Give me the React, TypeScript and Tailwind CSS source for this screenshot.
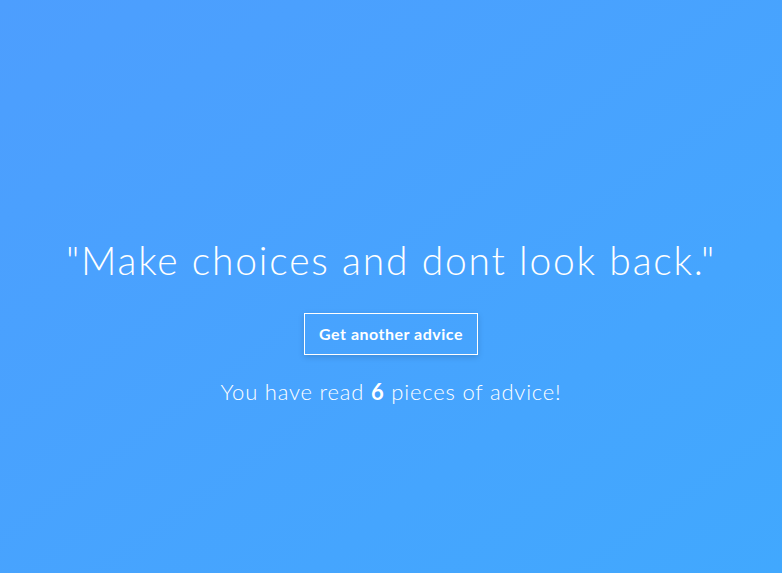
export default function App() {
  const count = 6;
  return (
    <div className="w-full h-[573px] bg-gradient-to-br from-[#4d9efe] to-[#41a8fe] flex flex-col items-center pt-[234px] text-white font-['Lato','Noto_Sans',sans-serif]">
      <h1 className="text-[39px] leading-[52px] font-light tracking-[1.8px]">
        "Make choices and dont look back."
      </h1>
      <button className="mt-[27px] h-[42px] px-[14px] border border-white text-[16px] font-bold tracking-[0.5px] shadow-[0_2px_6px_rgba(0,0,0,0.15)] cursor-pointer">
        Get another advice
      </button>
      <p className="mt-[20px] text-[22px] font-light tracking-[0.8px]">
        You have read <span className="font-bold">{count}</span> pieces of advice!
      </p>
    </div>
  );
}
